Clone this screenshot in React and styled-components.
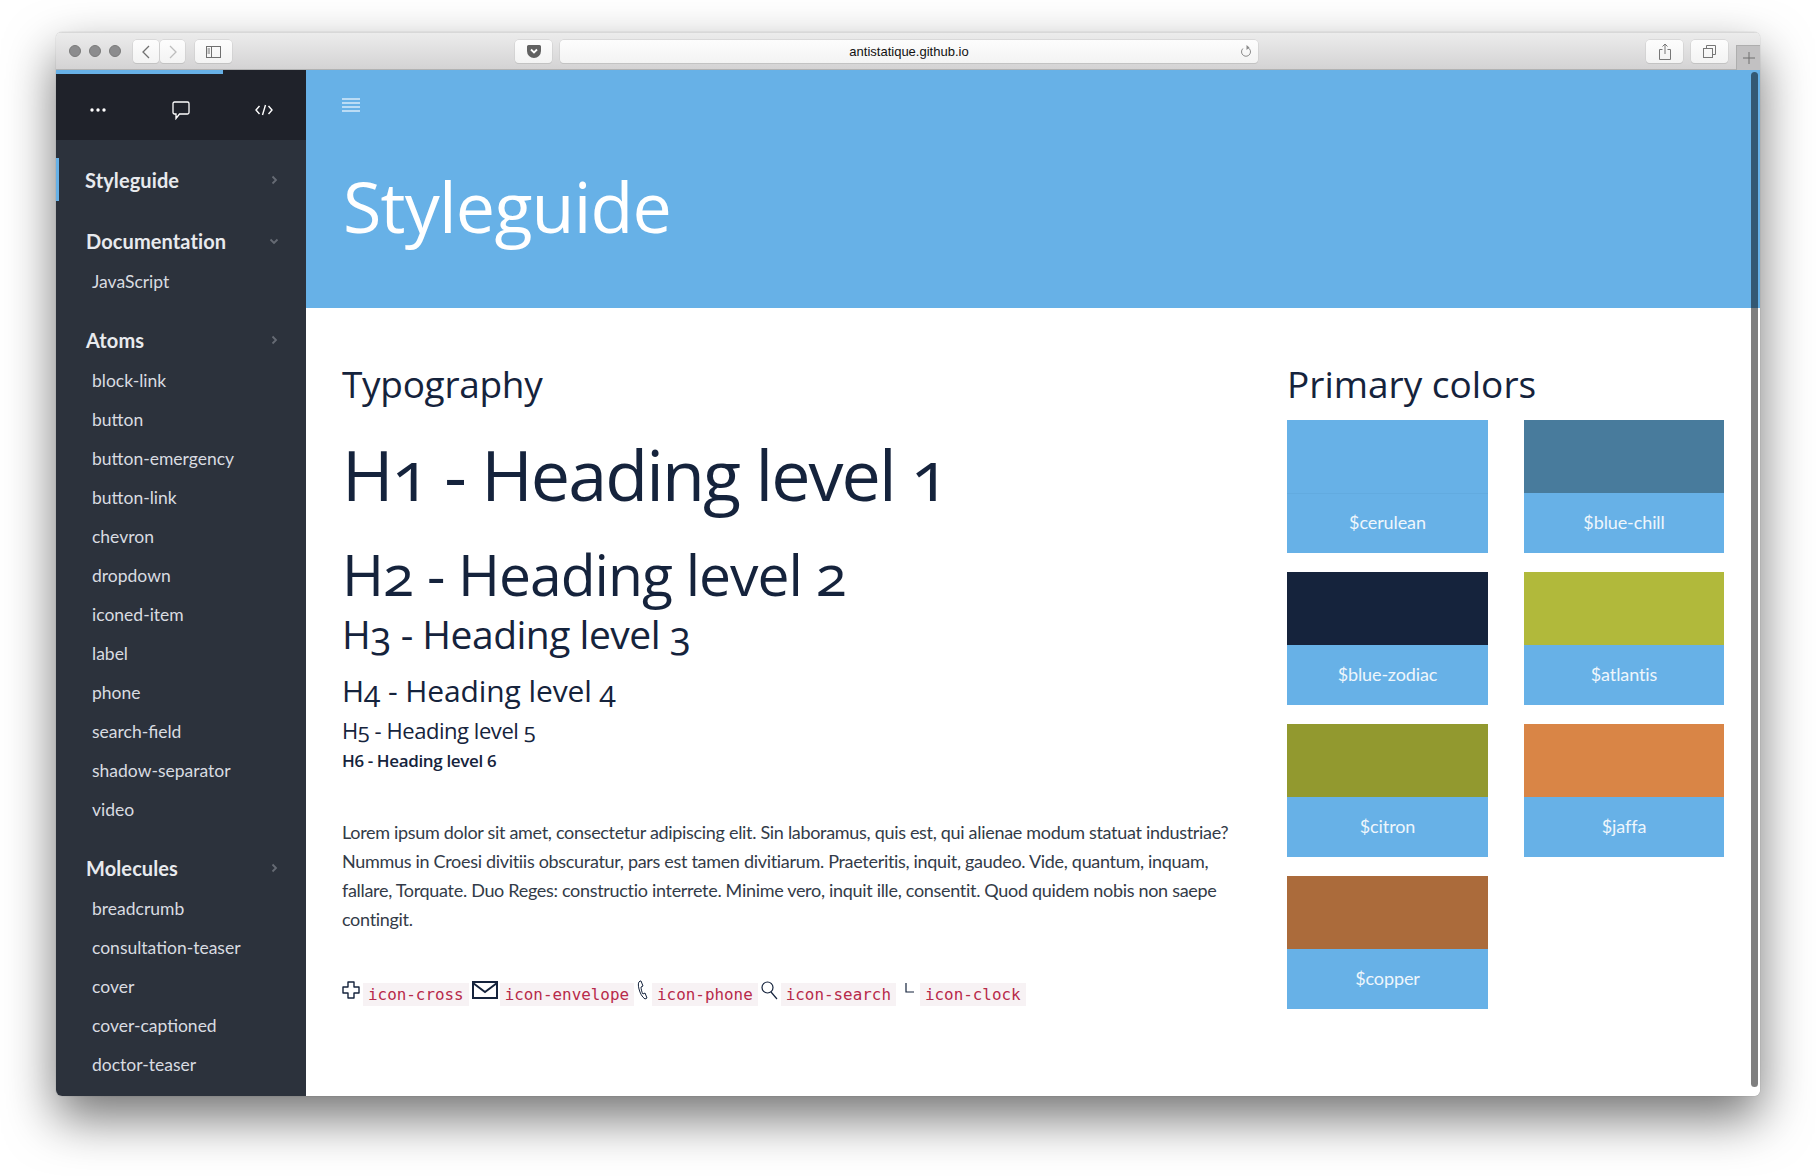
import React from 'react'
import styled, { createGlobalStyle } from 'styled-components'

const CERULEAN = '#67b1e7'
const HEADING = '#15233c'

const GlobalStyle = createGlobalStyle`
  html, body {
    margin: 0;
    background: #fff;
  }
  body {
    font-family: Lato, "Liberation Sans", sans-serif;
    overflow: hidden;
  }
`

const Page = styled.div`
  width: 1816px;
  height: 1176px;
  box-sizing: border-box;
  padding: 32px 56px 80px 56px;
`

const BrowserWindow = styled.div`
  position: relative;
  height: 100%;
  display: flex;
  flex-direction: column;
  border-radius: 6px;
  overflow: hidden;
`

const WindowShadow = styled.div`
  height: 100%;
  border-radius: 6px;
  box-shadow: 0 22px 50px rgba(0, 0, 0, 0.55), 0 0 1px rgba(0, 0, 0, 0.4);
`

const Toolbar = styled.div`
  flex: none;
  height: 38px;
  box-sizing: border-box;
  display: flex;
  align-items: flex-start;
  padding: 7px 0 0 13px;
  background: linear-gradient(#ececec, #d4d3d4);
  border-top: 1px solid #d8d8d8;
  border-bottom: 1px solid #b2b2b2;
`

const Light = styled.span`
  flex: none;
  width: 12px;
  height: 12px;
  margin: 5px 8px 0 0;
  border-radius: 50%;
  background: #8c8c8e;
  border: 0.5px solid #7a7a7a;
  box-sizing: border-box;
`

const ToolButton = styled.div`
  flex: none;
  width: ${p => p.$w}px;
  height: 23px;
  margin-left: ${p => p.$ml || 0}px;
  display: flex;
  align-items: center;
  justify-content: center;
  box-sizing: border-box;
  background: linear-gradient(#fdfdfd, #f3f3f3);
  border-radius: 4px;
  box-shadow: 0 0 0 0.5px #c9c9c9, 0 1px 0 #bdbdbd;
`

const AddressBar = styled(ToolButton)`
  position: relative;
  font-family: "Liberation Sans", sans-serif;
  font-size: 13px;
  color: #111;
`

const Reload = styled.svg`
  position: absolute;
  right: 5px;
  top: 4px;
`

const NewTab = styled.div`
  position: absolute;
  right: 0;
  top: 13px;
  width: 24px;
  height: 25px;
  box-sizing: border-box;
  display: flex;
  align-items: center;
  justify-content: center;
  background: #c2c1c2;
  border-left: 1px solid #aeaeae;
  border-top: 1px solid #aeaeae;
`

const Body = styled.div`
  flex: 1;
  min-height: 0;
  display: flex;
  position: relative;
`

const Progress = styled.div`
  position: absolute;
  left: 0;
  top: 0;
  width: 167px;
  height: 4px;
  background: ${CERULEAN};
`

const Scrollbar = styled.div`
  position: absolute;
  right: 2px;
  top: 2px;
  bottom: 9px;
  width: 7px;
  border-radius: 4px;
  background: rgba(0, 0, 0, 0.5);
`

const Sidebar = styled.aside`
  flex: none;
  width: 250px;
  background: #2c323c;
  overflow: hidden;
`

const SideTop = styled.div`
  height: 70px;
  box-sizing: border-box;
  display: grid;
  grid-template-columns: repeat(3, 1fr);
  align-items: center;
  justify-items: center;
  padding-top: 10px;
  background: #1f222a;
  color: #fff;
`

const SideNav = styled.nav`
  padding-top: 18px;
`

const Section = styled.div`
  height: ${p => p.$h || 43}px;
  margin-bottom: ${p => p.$mb || 0}px;
  padding: ${p => p.$pt || 0}px 26px 0 ${p => (p.$active ? 26 : 30)}px;
  box-sizing: border-box;
  display: flex;
  align-items: center;
  justify-content: space-between;
  border-left: ${p => (p.$active ? `3px solid ${CERULEAN}` : 'none')};
  font-size: 20px;
  font-weight: 700;
  letter-spacing: 0.1px;
  color: #e8eaee;
`

const Item = styled.div`
  height: 39px;
  line-height: 39px;
  padding-left: 36px;
  font-size: 17.5px;
  color: #d9dce1;
`

const Main = styled.main`
  flex: 1;
  min-width: 0;
  background: #fff;
  overflow: hidden;
`

const Hero = styled.header`
  height: 238px;
  box-sizing: border-box;
  padding: 26px 0 0 36px;
  background: ${CERULEAN};
  color: #fff;
`

const HeroTitle = styled.h1`
  margin: 51px 0 0 1px;
  font-family: "Open Sans", sans-serif;
  font-weight: 400;
  font-size: 70px;
  line-height: 80px;
  letter-spacing: -0.8px;
`

const Columns = styled.div`
  display: flex;
  padding: 48px 36px 0 36px;
`

const LeftCol = styled.section`
  width: 900px;
  flex: none;
`

const RightCol = styled.section`
  margin-left: 45px;
`

const Heading = styled.div`
  font-family: "Open Sans", sans-serif;
  font-feature-settings: "onum";
  font-weight: ${p => p.$weight || 400};
  font-size: ${p => p.$size}px;
  line-height: ${p => p.$lh}px;
  margin-top: ${p => p.$mt || 0}px;
  letter-spacing: ${p => p.$ls || 0}px;
  color: ${HEADING};
  white-space: nowrap;
`

const Paragraph = styled.p`
  margin: 44px 0 0 0;
  font-size: 18px;
  line-height: 29px;
  letter-spacing: -0.31px;
  color: #333b48;
`

const IconRow = styled.div`
  display: flex;
  align-items: center;
  margin-top: 46px;
  height: 26px;
`

const IconCode = styled.code`
  font-family: "DejaVu Sans Mono", monospace;
  font-size: 15.9px;
  line-height: 23px;
  padding: 0 5px;
  margin: 3px 3px 0 ${p => p.$ml || 0}px;
  color: #b82a4a;
  background: #f7f2f4;
`

const Glyph = styled.svg`
  flex: none;
  margin-top: ${p => p.$mt || -6}px;
  margin-left: ${p => p.$ml || 0}px;
  margin-right: ${p => p.$mr || 0}px;
`

const SwatchGrid = styled.div`
  display: grid;
  grid-template-columns: 201px 200px;
  column-gap: 36px;
  row-gap: 19px;
  margin-top: 8px;
`

const Swatch = styled.div`
  height: 133px;
  background: ${CERULEAN};
  display: flex;
  flex-direction: column;
`

const SwatchColor = styled.div`
  height: 73px;
  flex: none;
  background: ${p => p.$color};
  border-bottom: ${p => (p.$color === CERULEAN ? '1px solid #62abe0' : 'none')};
`

const SwatchName = styled.div`
  flex: 1;
  display: flex;
  align-items: center;
  justify-content: center;
  padding-bottom: 3px;
  font-size: 18px;
  letter-spacing: -0.1px;
  color: #eef6fc;
`

const swatches = [
  ['$cerulean', CERULEAN],
  ['$blue-chill', '#487b9c'],
  ['$blue-zodiac', '#15233c'],
  ['$atlantis', '#b1b93b'],
  ['$citron', '#92992f'],
  ['$jaffa', '#d98546'],
  ['$copper', '#ab6b3b'],
]

const atoms = ['block-link', 'button', 'button-emergency', 'button-link', 'chevron', 'dropdown', 'iconed-item', 'label', 'phone', 'search-field', 'shadow-separator', 'video']
const molecules = ['breadcrumb', 'consultation-teaser', 'cover', 'cover-captioned', 'doctor-teaser', 'hospital-teaser']

const Chevron = ({ down }) => (
  <svg width="12" height="12" viewBox="0 0 12 12" fill="none" stroke="#666b74" strokeWidth="1.8">
    <path d={down ? 'M2.5 4.5 6 8l3.5-3.5' : 'M4.5 2.5 8 6l-3.5 3.5'} />
  </svg>
)

export default function App() {
  return (
    <Page>
      <GlobalStyle />
      <WindowShadow>
        <BrowserWindow>
          <Toolbar>
            <Light />
            <Light />
            <Light />
            <ToolButton $w={26} $ml={4}>
              <svg width="10" height="14" viewBox="0 0 10 14" fill="none" stroke="#707070" strokeWidth="1.3">
                <path d="M8 1 2 7l6 6" />
              </svg>
            </ToolButton>
            <ToolButton $w={25} $ml={1}>
              <svg width="10" height="14" viewBox="0 0 10 14" fill="none" stroke="#bdbdbd" strokeWidth="1.3">
                <path d="M2 1l6 6-6 6" />
              </svg>
            </ToolButton>
            <ToolButton $w={37} $ml={10}>
              <svg width="15" height="12" viewBox="0 0 15 12" fill="none" stroke="#707070">
                <rect x="0.5" y="0.5" width="14" height="11" />
                <path d="M5.5 0.5v11M1.5 3h2.5M1.5 5h2.5M1.5 7h2.5" />
              </svg>
            </ToolButton>
            <ToolButton $w={37} $ml={283}>
              <svg width="14" height="13" viewBox="0 0 14 13">
                <path d="M1.5 0h11A1.5 1.5 0 0 1 14 1.5V6a7 7 0 0 1-14 0V1.5A1.5 1.5 0 0 1 1.5 0z" fill="#616161" />
                <path d="M4 4.5 7 7.5l3-3" fill="none" stroke="#fff" strokeWidth="1.8" />
              </svg>
            </ToolButton>
            <AddressBar $w={698} $ml={8}>
              antistatique.github.io
              <Reload width="14" height="15" viewBox="0 0 14 15" fill="none" stroke="#8a8a8a" strokeWidth="1">
                <path d="M8.5 3.5a4.5 4.5 0 1 1-4.6 1" />
                <path d="M7.5 1v5l3-2.5z" fill="#8a8a8a" stroke="none" />
              </Reload>
            </AddressBar>
            <ToolButton $w={37} $ml={388}>
              <svg width="12" height="17" viewBox="0 0 12 17" fill="none" stroke="#777" strokeWidth="1">
                <path d="M3.5 6.5H.5v10h11v-10h-3M6 11V1M3.5 3.5 6 1l2.5 2.5" />
              </svg>
            </ToolButton>
            <ToolButton $w={37} $ml={8}>
              <svg width="13" height="13" viewBox="0 0 13 13" fill="none" stroke="#777" strokeWidth="1">
                <rect x="0.5" y="3.5" width="9" height="9" />
                <path d="M3.5 3.5v-3h9v9h-3" />
              </svg>
            </ToolButton>
            <NewTab>
              <svg width="12" height="12" viewBox="0 0 12 12" stroke="#6f6f6f" strokeWidth="1">
                <path d="M6 0v12M0 6h12" />
              </svg>
            </NewTab>
          </Toolbar>
          <Body>
            <Sidebar>
              <SideTop>
                <svg width="16" height="4" viewBox="0 0 16 4" fill="#fff">
                  <circle cx="2" cy="2" r="1.7" />
                  <circle cx="8" cy="2" r="1.7" />
                  <circle cx="14" cy="2" r="1.7" />
                </svg>
                <svg width="18" height="19" viewBox="0 0 18 19" fill="none" stroke="#fff" strokeWidth="1.3">
                  <path d="M2.5 1h13A1.5 1.5 0 0 1 17 2.5v9a1.5 1.5 0 0 1-1.5 1.5H7.5l-3.5 4.5V13H2.5A1.5 1.5 0 0 1 1 11.5v-9A1.5 1.5 0 0 1 2.5 1z" />
                </svg>
                <svg width="18" height="12" viewBox="0 0 18 12" fill="none" stroke="#fff" strokeWidth="1.4">
                  <path d="M4.5 2 1 6l3.5 4M13.5 2 17 6l-3.5 4M10.5 1 7.5 11" />
                </svg>
              </SideTop>
              <SideNav>
                <Section $active $mb={18}>
                  Styleguide <Chevron />
                </Section>
                <Section>
                  Documentation <Chevron down />
                </Section>
                <Item>JavaScript</Item>
                <Section $h={60} $pt={17}>
                  Atoms <Chevron />
                </Section>
                {atoms.map(name => <Item key={name}>{name}</Item>)}
                <Section $h={60} $pt={18}>
                  Molecules <Chevron />
                </Section>
                {molecules.map(name => <Item key={name}>{name}</Item>)}
              </SideNav>
            </Sidebar>
            <Main>
              <Hero>
                <svg width="18" height="14" viewBox="0 0 18 14" stroke="#d7eafa" strokeWidth="1.4">
                  <path d="M0 1h18M0 5h18M0 9h18M0 13h18" />
                </svg>
                <HeroTitle>Styleguide</HeroTitle>
              </Hero>
              <Columns>
                <LeftCol>
                  <Heading $size={37} $lh={56} $ls={-0.3}>Typography</Heading>
                  <Heading $size={70} $lh={90} $mt={17} $ls={-1.9}>H1 - Heading level 1</Heading>
                  <Heading $size={57} $lh={70} $mt={20} $ls={-1}>H2 - Heading level 2</Heading>
                  <Heading $size={39} $lh={50} $mt={0} $ls={-0.5}>H3 - Heading level 3</Heading>
                  <Heading $size={30} $lh={40} $mt={12} $ls={-0.1}>H4 - Heading level 4</Heading>
                  <Heading $size={22} $lh={30} $mt={4} $weight={500} $ls={-0.45}>H5 - Heading level 5</Heading>
                  <Heading $size={17} $lh={26} $mt={3} $weight={600} $ls={-0.35}>H6 - Heading level 6</Heading>
                  <Paragraph>
                    Lorem ipsum dolor sit amet, consectetur adipiscing elit. Sin laboramus, quis est, qui alienae modum statuat industriae? Nummus in Croesi divitiis obscuratur, pars est tamen divitiarum. Praeteritis, inquit, gaudeo. Vide, quantum, inquam, fallare, Torquate. Duo Reges: constructio interrete. Minime vero, inquit ille, consentit. Quod quidem nobis non saepe contingit.
                  </Paragraph>
                  <IconRow>
                    <Glyph width="18" height="18" viewBox="0 0 18 18" fill="none" stroke={HEADING} strokeWidth="1.4">
                      <path d="M6 1h6v5h5v6h-5v5H6v-5H1V6h5z" strokeLinejoin="round" />
                    </Glyph>
                    <IconCode $ml={3}>icon-cross</IconCode>
                    <Glyph width="26" height="18" viewBox="0 0 26 18" fill="none" stroke={HEADING} strokeWidth="2">
                      <rect x="1" y="1" width="24" height="16" />
                      <path d="M1 2l12 9 12-9" />
                    </Glyph>
                    <IconCode $ml={2}>icon-envelope</IconCode>
                    <Glyph width="12" height="20" viewBox="0 0 12 20" fill="none" stroke={HEADING} strokeWidth="1">
                      <path d="M3 1C1 2 1 5 2 9s3 8 6 10l2-1-2-5-2 1c-1-1-2-5-2-7l2-1-2-5z" />
                    </Glyph>
                    <IconCode $ml={3}>icon-phone</IconCode>
                    <Glyph width="17" height="19" viewBox="0 0 17 19" fill="none" stroke={HEADING} strokeWidth="1.2">
                      <circle cx="6.5" cy="6.5" r="5.5" />
                      <path d="M10 11l6 7" />
                    </Glyph>
                    <IconCode $ml={3}>icon-search</IconCode>
                    <Glyph width="12" height="10" viewBox="0 0 12 10" fill="none" stroke={HEADING} strokeWidth="1.2" $ml={6} $mr={3} $mt={-10}>
                      <path d="M1 0v9h8" />
                    </Glyph>
                    <IconCode>icon-clock</IconCode>
                  </IconRow>
                </LeftCol>
                <RightCol>
                  <Heading $size={37} $lh={56}>Primary colors</Heading>
                  <SwatchGrid>
                    {swatches.map(([name, color]) => (
                      <Swatch key={name}>
                        <SwatchColor $color={color} />
                        <SwatchName>{name}</SwatchName>
                      </Swatch>
                    ))}
                  </SwatchGrid>
                </RightCol>
              </Columns>
            </Main>
            <Progress />
            <Scrollbar />
          </Body>
        </BrowserWindow>
      </WindowShadow>
    </Page>
  )
}
